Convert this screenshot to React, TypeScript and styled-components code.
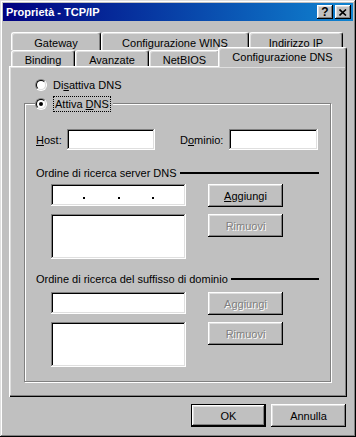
import React from "react";
import styled, { createGlobalStyle, css } from "styled-components";

const GlobalStyle = createGlobalStyle`
  body {
    margin: 0;
    background: #c0c0c0;
  }
  * {
    box-sizing: border-box;
  }
`;

const raised = css`
  box-shadow: inset -1px -1px #000, inset 1px 1px #fff, inset -2px -2px #808080,
    inset 2px 2px #dfdfdf;
`;

const sunken = css`
  box-shadow: inset -1px -1px #fff, inset 1px 1px #808080, inset -2px -2px #dfdfdf,
    inset 2px 2px #000;
`;

const Window = styled.div`
  width: 356px;
  height: 437px;
  padding: 3px;
  display: flex;
  flex-direction: column;
  background: #c0c0c0;
  font-family: "Liberation Sans", Arial, sans-serif;
  font-size: 11px;
  color: #000;
  box-shadow: inset -1px -1px #000, inset 1px 1px #dfdfdf, inset -2px -2px #808080,
    inset 2px 2px #fff;
`;

const TitleBar = styled.div`
  height: 18px;
  display: flex;
  align-items: center;
  gap: 2px;
  padding: 0 2px 0 3px;
  background: linear-gradient(to right, #000080, #1084d0);
  color: #fff;
  font-weight: bold;
`;

const Title = styled.span`
  flex: 1;
`;

const CaptionButton = styled.div`
  width: 16px;
  height: 14px;
  display: flex;
  align-items: center;
  justify-content: center;
  background: #c0c0c0;
  color: #000;
  font-weight: bold;
  font-size: 12px;
  ${raised}
`;

const Tabs = styled.div`
  margin: 11px 0 0 8px;
  display: flex;
  flex-direction: column;
`;

const TabRow = styled.div<{ $h: number }>`
  height: ${(p) => p.$h}px;
  display: flex;
  align-items: flex-end;
`;

const Tab = styled.div<{ $w: number; $h: number; $selected?: boolean }>`
  width: ${(p) => p.$w}px;
  height: ${(p) => p.$h}px;
  display: flex;
  align-items: center;
  justify-content: center;
  padding-top: ${(p) => (p.$selected ? 0 : 2)}px;
  background: #c0c0c0;
  border-top: 1px solid #fff;
  border-left: 1px solid #fff;
  border-right: 1px solid #000;
  border-radius: 3px 3px 0 0;
  box-shadow: inset -1px 0 #808080, inset 1px 1px #dfdfdf;
  white-space: nowrap;
  ${(p) =>
    p.$selected &&
    css`
      margin: 0 -2px -1px -2px;
      position: relative;
      z-index: 1;
      padding-bottom: 1px;
    `}
`;

const Panel = styled.div`
  margin-left: 6px;
  width: 338px;
  height: 331px;
  display: flex;
  flex-direction: column;
  box-shadow: inset 1px 1px #fff, inset -1px -1px #000, inset -2px -2px #808080,
    inset 2px 2px #dfdfdf;
`;

const RadioRow = styled.label`
  margin: 12px 0 0 26px;
  height: 14px;
  display: flex;
  align-items: center;
  gap: 6px;
`;

const RadioOuter = styled.span`
  width: 12px;
  height: 12px;
  border-radius: 50%;
  border: 1px solid;
  border-color: #808080 #fff #fff #808080;
  display: flex;
  flex-shrink: 0;
`;

const RadioInner = styled.span<{ $checked?: boolean }>`
  flex: 1;
  border-radius: 50%;
  border: 1px solid;
  border-color: #000 #dfdfdf #dfdfdf #000;
  background: #fff;
  display: flex;
  align-items: center;
  justify-content: center;
  &::after {
    content: "";
    width: 4px;
    height: 4px;
    border-radius: 50%;
    background: ${(p) => (p.$checked ? "#000" : "transparent")};
  }
`;

const GroupBox = styled.div`
  margin: 11px 0 0 15px;
  width: 307px;
  height: 279px;
  display: flex;
  flex-direction: column;
  border: 1px solid #808080;
  box-shadow: inset 1px 1px #fff, 1px 1px #fff;
`;

const Legend = styled.label`
  margin: -8px 0 0 10px;
  align-self: flex-start;
  height: 16px;
  padding-right: 2px;
  display: flex;
  align-items: center;
  gap: 6px;
  background: #c0c0c0;
`;

const FocusText = styled.span`
  border: 1px dotted #000;
  padding: 1px 1px;
`;

const FieldRow = styled.div`
  margin: 17px 0 0 11px;
  height: 21px;
  display: flex;
  align-items: center;
`;

const FieldLabel = styled.span<{ $w: number; $ml?: number }>`
  width: ${(p) => p.$w}px;
  margin-left: ${(p) => p.$ml || 0}px;
`;

const Edit = styled.div<{ $w?: number; $h: number }>`
  width: ${(p) => (p.$w ? `${p.$w}px` : "auto")};
  height: ${(p) => p.$h}px;
  background: #fff;
  ${sunken}
`;

const IpEdit = styled(Edit)`
  display: flex;
  justify-content: space-evenly;
  align-items: flex-end;
  padding-bottom: 7px;
`;

const IpDot = styled.span`
  width: 2px;
  height: 2px;
  background: #000;
`;

const SectionHeader = styled.div<{ $mt: number }>`
  margin: ${(p) => p.$mt}px 11px 0 11px;
  height: 13px;
  display: flex;
  align-items: center;
  gap: 3px;
  white-space: nowrap;
`;

const Rule = styled.span`
  flex: 1;
  height: 2px;
  background: #000;
`;

const ListGrid = styled.div<{ $mt: number }>`
  margin: ${(p) => p.$mt}px 0 0 26px;
  display: grid;
  grid-template-columns: 135px 75px;
  grid-template-rows: 23px 45px;
  column-gap: 22px;
  row-gap: 7px;
  align-items: start;
`;

const Button = styled.div<{ $disabled?: boolean; $default?: boolean }>`
  width: 75px;
  height: 23px;
  display: flex;
  align-items: center;
  justify-content: center;
  background: #c0c0c0;
  ${raised}
  ${(p) =>
    p.$disabled &&
    css`
      color: #808080;
      text-shadow: 1px 1px #fff;
    `}
  ${(p) =>
    p.$default &&
    css`
      box-shadow: inset 0 0 0 1px #000, inset -2px -2px #000, inset 2px 2px #fff,
        inset -3px -3px #808080, inset 3px 3px #dfdfdf;
    `}
`;

const Footer = styled.div`
  margin-top: 7px;
  padding-right: 7px;
  display: flex;
  justify-content: flex-end;
  gap: 5px;
`;

function Radio({ checked }: { checked?: boolean }) {
  return (
    <RadioOuter>
      <RadioInner $checked={checked} />
    </RadioOuter>
  );
}

function CloseGlyph() {
  return (
    <svg width="8" height="7" viewBox="0 0 8 7">
      <path d="M0.5 0.5 L7 6.5 M7 0.5 L0.5 6.5" stroke="#000" strokeWidth="1.6" />
    </svg>
  );
}

export default function App() {
  return (
    <>
      <GlobalStyle />
      <Window>
        <TitleBar>
          <Title>Proprietà - TCP/IP</Title>
          <CaptionButton>?</CaptionButton>
          <CaptionButton>
            <CloseGlyph />
          </CaptionButton>
        </TitleBar>

        <Tabs>
          <TabRow $h={18}>
            <Tab $w={90} $h={18}>Gateway</Tab>
            <Tab $w={148} $h={18}>Configurazione WINS</Tab>
            <Tab $w={94} $h={18}>Indirizzo IP</Tab>
          </TabRow>
          <TabRow $h={16}>
            <Tab $w={64} $h={16}>Binding</Tab>
            <Tab $w={74} $h={16}>Avanzate</Tab>
            <Tab $w={71} $h={16}>NetBIOS</Tab>
            <Tab $w={129} $h={20} $selected>
              Configurazione DNS
            </Tab>
          </TabRow>
        </Tabs>

        <Panel>
          <RadioRow>
            <Radio />
            <span>
              Di<u>s</u>attiva DNS
            </span>
          </RadioRow>

          <GroupBox>
            <Legend>
              <Radio checked />
              <FocusText>
                Attiva <u>D</u>NS
              </FocusText>
            </Legend>

            <FieldRow>
              <FieldLabel $w={31}>
                <u>H</u>ost:
              </FieldLabel>
              <Edit $w={88} $h={21} />
              <FieldLabel $w={49} $ml={25}>
                D<u>o</u>minio:
              </FieldLabel>
              <Edit $w={89} $h={21} />
            </FieldRow>

            <SectionHeader $mt={16}>
              Ordine di ricerca server DNS
              <Rule />
            </SectionHeader>
            <ListGrid $mt={5}>
              <IpEdit $h={22}>
                <IpDot />
                <IpDot />
                <IpDot />
              </IpEdit>
              <Button>
                <span>
                  <u>A</u>ggiungi
                </span>
              </Button>
              <Edit $h={45} />
              <Button $disabled>Rimuovi</Button>
            </ListGrid>

            <SectionHeader $mt={13}>
              Ordine di ricerca del suffisso di dominio
              <Rule />
            </SectionHeader>
            <ListGrid $mt={7}>
              <Edit $h={22} />
              <Button $disabled>Aggiungi</Button>
              <Edit $h={45} />
              <Button $disabled>Rimuovi</Button>
            </ListGrid>
          </GroupBox>
        </Panel>

        <Footer>
          <Button $default>OK</Button>
          <Button>Annulla</Button>
        </Footer>
      </Window>
    </>
  );
}
